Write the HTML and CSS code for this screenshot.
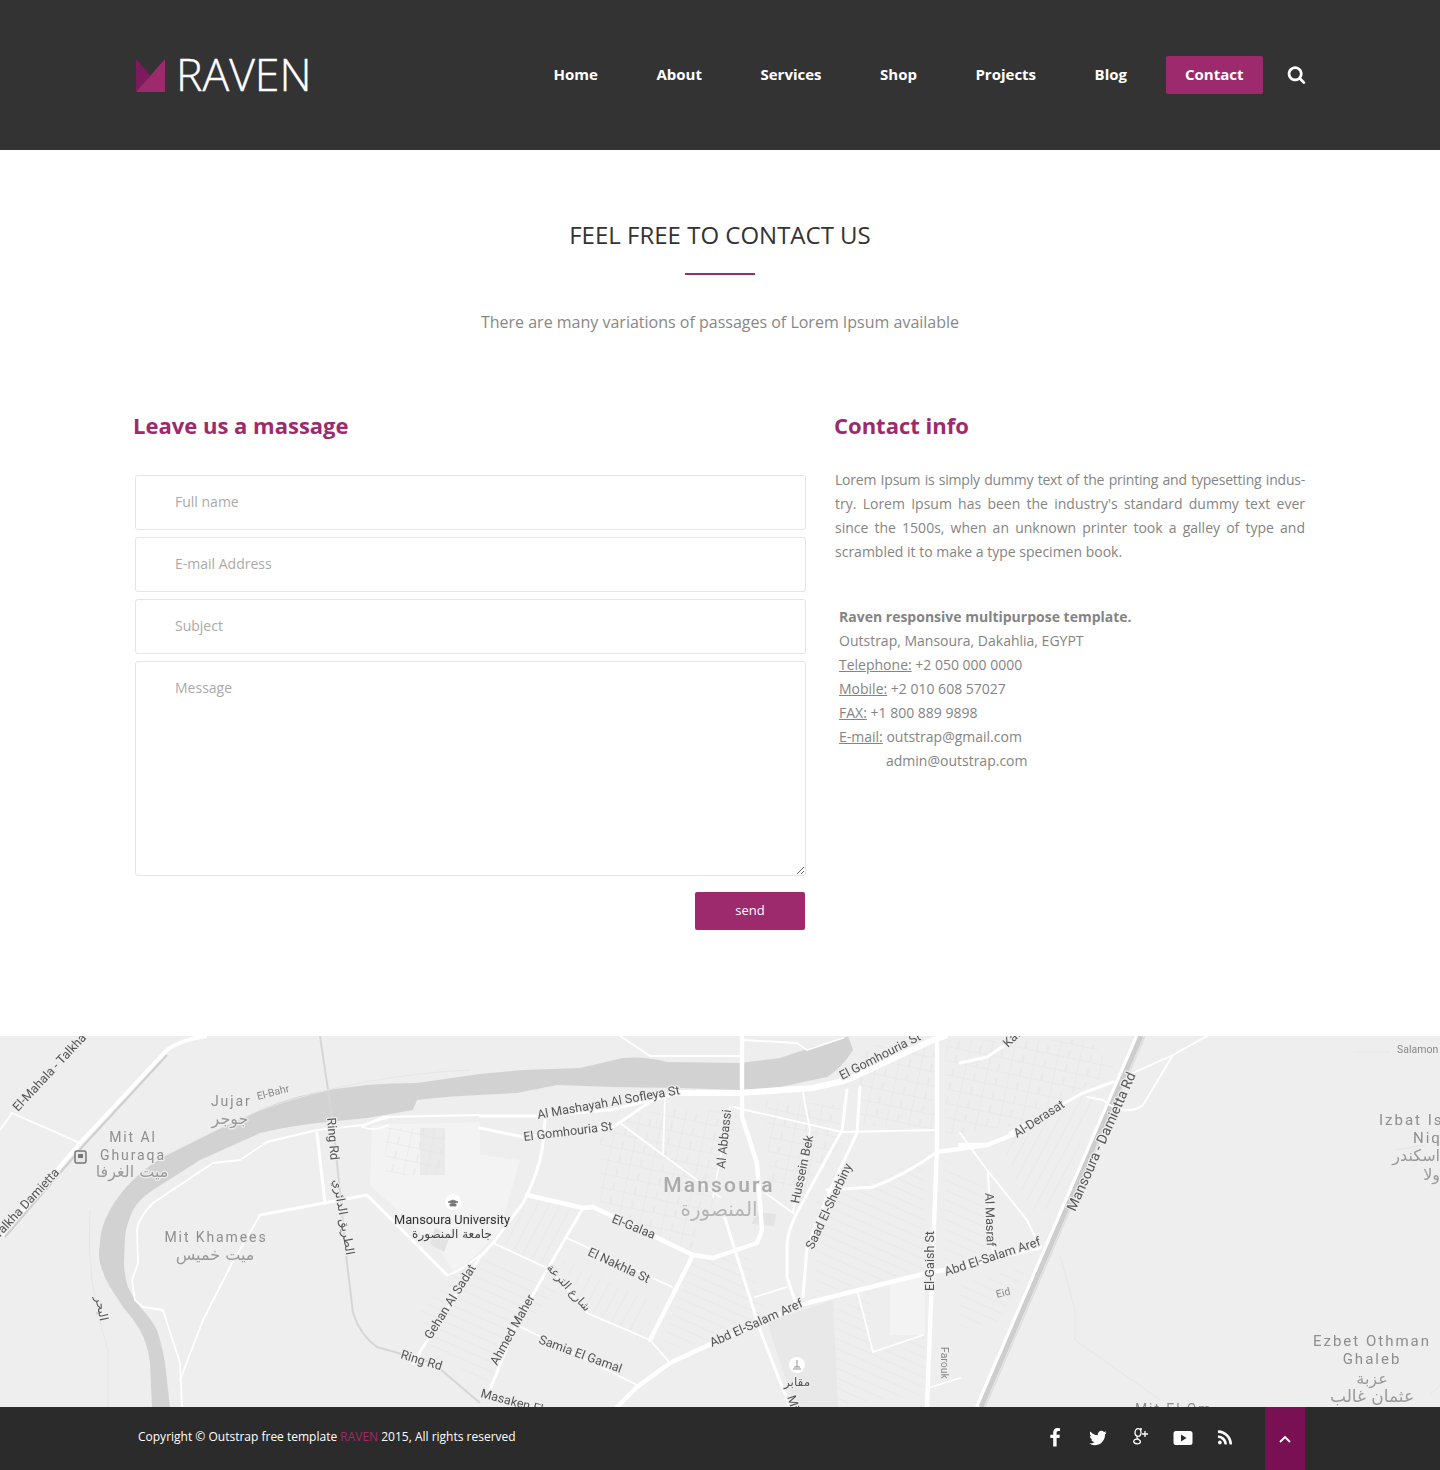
FILE: index.html
```html
<!DOCTYPE html>
<html lang="en">
<head>
<meta charset="utf-8">
<title>Raven - Contact</title>
<link rel="stylesheet" href="styles.css">
</head>
<body>
<header class="site-header">
  <div class="container header-inner">
    <a class="logo" href="#">
      <svg class="logo-mark" viewBox="0 0 30 33" width="30" height="33"><polygon class="mark-dark" points="1,0 17,18 1,33"/><polygon class="mark-light" points="30,0 30,33 1,33"/></svg>
      <span class="logo-text">RAVEN</span>
    </a>
    <nav class="main-nav">
      <a href="#">Home</a><a href="#">About</a><a href="#">Services</a><a href="#">Shop</a><a href="#">Projects</a><a href="#">Blog</a><a href="#" class="active">Contact</a>
    </nav>
    <svg class="search-icon" viewBox="0 0 1792 1792" width="19" height="19"><path d="M1216 832q0-185-131.500-316.500t-316.500-131.500-316.500 131.500-131.500 316.500 131.500 316.500 316.500 131.500 316.500-131.500 131.500-316.500zm512 832q0 52-38 90t-90 38q-54 0-90-38l-343-342q-179 124-399 124-143 0-273.500-55.500t-225-150-150-225-55.500-273.500 55.500-273.500 150-225 225-150 273.500-55.500 273.500 55.500 225 150 150 225 55.500 273.500q0 220-124 399l343 343q37 37 37 90z"/></svg>
  </div>
</header>

<main class="container contact">
  <div class="section-head">
    <h2>FEEL FREE TO CONTACT US</h2>
    <div class="divider"></div>
    <p>There are many variations of passages of Lorem Ipsum available</p>
  </div>
  <div class="columns">
    <section class="col-form">
      <h3 class="title title-form">Leave us a massage</h3>
      <form class="form">
        <input type="text" placeholder="Full name">
        <input type="text" placeholder="E-mail Address">
        <input type="text" placeholder="Subject">
        <textarea placeholder="Message"></textarea>
        <button type="button">send</button>
      </form>
    </section>
    <section class="col-info">
      <h3 class="title">Contact info</h3>
      <p class="info-text">
        <span class="line line-tight">Lorem Ipsum is simply dummy text of the printing and typesetting indus-</span>
        <span class="line">try. Lorem Ipsum has been the industry's standard dummy text ever</span>
        <span class="line">since the 1500s, when an unknown printer took a galley of type and</span>
        <span class="line line-last">scrambled it to make a type specimen book.</span>
      </p>
      <address class="address">
        <strong>Raven responsive multipurpose template.</strong><br>
        Outstrap, Mansoura, Dakahlia, EGYPT<br>
        <u>Telephone:</u> +2 050 000 0000<br>
        <u>Mobile:</u> +2 010 608 57027<br>
        <u>FAX:</u> +1 800 889 9898<br>
        <u>E-mail:</u> outstrap@gmail.com<br>
        <span class="indent">admin@outstrap.com</span>
      </address>
    </section>
  </div>
</main>

<div class="map">
<svg viewBox="0 1036 1440 371" width="1440" height="371">
  <defs>
    <pattern id="hatchA" width="9" height="9" patternUnits="userSpaceOnUse" patternTransform="rotate(24)"><path class="hatch" d="M0 0H9"/></pattern>
    <pattern id="hatchB" width="10" height="10" patternUnits="userSpaceOnUse" patternTransform="rotate(-62)"><path class="hatch" d="M0 0H10"/></pattern>
    <pattern id="hatchC" width="22" height="14" patternUnits="userSpaceOnUse" patternTransform="rotate(12)"><path class="hatch" d="M0 0H22M0 0V14M11 7V14"/></pattern>
  </defs>
  <rect class="land" x="0" y="1036" width="1440" height="371"/>

  <g class="blocks">
    <polygon class="hatch-a" points="420,1310 480,1250 560,1290 520,1330 490,1390 430,1345"/>
    <polygon class="hatch-b" points="533,1200 590,1212 555,1270 497,1240"/>
    <polygon class="hatch-c" points="600,1125 660,1110 740,1110 715,1200 690,1250 600,1205"/>
    <polygon class="hatch-b" points="560,1260 650,1300 640,1340 590,1310"/>
    <polygon class="hatch-a" points="690,1265 745,1250 770,1320 720,1340 660,1350"/>
    <polygon class="hatch-c" points="765,1100 840,1105 845,1135 800,1205 770,1185"/>
    <polygon class="hatch-a" points="815,1200 925,1160 925,1270 815,1295"/>
    <polygon class="hatch-c" points="860,1045 935,1045 935,1130 860,1125"/>
    <polygon class="hatch-c" points="945,1040 1090,1040 1115,1070 1020,1125 945,1135"/>
    <polygon class="hatch-b" points="1000,1140 1080,1095 1100,1100 1050,1210 1030,1210"/>
    <polygon class="hatch-a" points="945,1160 985,1180 985,1250 945,1265"/>
    <polygon class="hatch-a" points="960,1285 1030,1265 1000,1320 960,1330"/>
    <polygon class="hatch-a" points="835,1310 870,1290 870,1352 925,1335 925,1395 830,1405"/>
    <polygon class="cemetery" points="767,1322 833,1300 838,1407 795,1407"/>
    <polygon class="lot" points="890,1285 925,1275 925,1335 890,1335"/>
    <polygon class="lot" points="372,1125 480,1122 480,1155 520,1160 500,1230 455,1275 440,1250 370,1185"/>
    <polygon class="lot-dark" points="435,1228 450,1236 444,1252 430,1244"/>
    <polygon class="lot-dark" points="755,1212 776,1214 774,1226 752,1224"/>
    <polygon class="hatch-c" points="385,1128 445,1128 445,1175 385,1175"/>
    <polygon class="hatch-dense" points="420,1128 445,1128 445,1175 420,1175"/>
  </g>

  <path class="river" d="M480 1074 L417 1083 Q390 1083 367 1085 L327 1090 Q295 1096 267 1107 L217 1130 L167 1155 Q148 1165 133 1180 Q118 1195 110 1210 Q100 1228 100 1243 Q98 1255 100 1263 Q103 1275 110 1287 L123 1307 Q133 1318 140 1330 Q148 1345 150 1363 L152 1407 L170 1407 L165 1363 Q162 1345 157 1330 Q150 1317 140 1307 Q133 1298 128 1287 Q124 1275 124 1263 L125 1237 Q127 1222 133 1210 Q140 1198 153 1190 L200 1160 L260 1133 Q290 1126 317 1123 L367 1118 L413 1110 L417 1100 Q450 1096 480 1095 L517 1093 L557 1085 L613 1087 L680 1088 L740 1090 L780 1087 L827 1077 Q842 1068 853 1050 L848 1036 L847 1037 L813 1047 L780 1058 L740 1063 L667 1062 Q645 1056 623 1058 L580 1068 L523 1070 Z"/>

  <path class="ring-main" d="M320 1036 L333 1123 L347 1263 L353 1313 Q360 1335 377 1347 L433 1363 L480 1403"/>
  <g class="ring-gray">
    <path d="M90 1210 Q85 1280 108 1350 V1407"/>
    <path d="M260 1110 Q360 1075 470 1070"/>
    <path d="M1060 1255 L1075 1310 L1075 1340 L1160 1400"/>
    <path d="M1390 1052 H1355"/>
    <path d="M1395 1150 L1425 1145"/>
    <path d="M1430 1395 L1440 1385"/>
  </g>

  <g class="motorway-edge">
    <path d="M1137 1036 L977 1407"/>
    <path d="M207 1036 Q180 1040 167 1050 L80 1143 L0 1237"/>
  </g>
  <path class="motorway-core" d="M1141 1036 L981 1407"/>
  <path class="motorway-right" d="M1145 1036 L985 1407"/>
  <path class="motorway-left" d="M167 1055 L84 1145 L5 1237"/>

  <g class="road thin">
    <path d="M12 1113 L80 1143"/>
    <path d="M12 1113 L0 1130"/>
    <path d="M480 1115 L383 1117 L363 1125 L317 1130 L267 1142 L240 1160 L213 1163 L153 1203 Q138 1218 137 1230 L138 1263 L132 1280 L135 1300 L143 1307 L163 1310 L180 1363 L182 1407"/>
    <path d="M260 1215 L230 1267 L203 1320 L180 1380"/>
    <path d="M362 1127 Q375 1132 388 1125 M362 1127 Q375 1120 388 1118"/>
    <path d="M447 1275 Q460 1272 480 1255"/>
    <path d="M493 1243 L547 1268 Q570 1290 587 1313 L650 1340"/>
    <path d="M567 1238 L672 1287"/>
    <path d="M517 1325 L637 1385"/>
    <path d="M665 1097 L663 1155 L720 1197"/>
    <path d="M620 1123 L663 1155"/>
    <path d="M733 1107 L842 1132 L937 1130"/>
    <path d="M730 1107 L713 1197"/>
    <path d="M803 1093 L810 1130 L793 1212"/>
    <path d="M757 1187 L793 1213"/>
    <path d="M755 1297 L787 1287"/>
    <path d="M858 1293 L873 1352 L923 1335"/>
    <path d="M928 1388 L960 1378"/>
    <path d="M620 1036 L650 1056 L742 1056"/>
    <path d="M743 1040 L797 1043 L807 1050 L843 1038"/>
    <path d="M1133 1073 L1173 1055 L1207 1036"/>
    <path d="M1087 1097 L1103 1100 Q1118 1112 1127 1110 Q1138 1110 1143 1105 L1173 1055"/>
    <path d="M960 1133 L987 1170 L1027 1220 L1038 1243"/>
    <path d="M988 1173 L993 1257"/>
    <path d="M670 1363 L650 1340"/>
  </g>
  <g class="road medium">
    <path d="M260 1215 L367 1195 L447 1275"/>
    <path d="M317 1133 L325 1203"/>
    <path d="M413 1363 L480 1257 L493 1243 L523 1203 Q540 1170 543 1143 L545 1120"/>
    <path d="M480 1128 L523 1137 L613 1127 L653 1100 L680 1093"/>
    <path d="M583 1208 L547 1270 L517 1323 L487 1397"/>
    <path d="M723 1212 L760 1330 L790 1407"/>
    <path d="M860 1087 L857 1133 L827 1197 L807 1247 L803 1297"/>
    <path d="M847 1090 L842 1130 L800 1207 Q787 1230 787 1247 L787 1277 L797 1307"/>
    <path d="M827 1190 L873 1187 Q905 1175 937 1152"/>
    <path d="M960 1063 L987 1057 L1017 1037"/>
    <path d="M1010 1133 L1083 1093 L1113 1082"/>
    <path d="M480 1116 L537 1116 L610 1110 L680 1093"/>
  </g>
  <g class="road wide">
    <path d="M742 1036 V1117 L757 1163 L762 1230 L757 1243 L713 1258 L693 1255 L593 1207 L583 1208 L527 1195"/>
    <path d="M693 1255 L650 1340"/>
    <path d="M617 1407 L637 1387 L670 1363 L713 1343 L807 1303 L927 1273 L960 1267 L1040 1247"/>
    <path d="M937 1036 V1147 L927 1407"/>
    <path d="M960 1145 L987 1145 L1017 1133"/>
    <path d="M937 1152 L987 1145"/>
  </g>
  <path class="road heavy" d="M680 1093 L740 1093 L813 1088 L847 1080 L933 1040 L945 1036"/>

  <g class="marker">
    <rect x="75" y="1151" width="11" height="12" rx="2"/>
    <path d="M78 1154 H83 V1158 H78 Z"/>
  </g>
  <circle class="poi" cx="453" cy="1202" r="8"/>
  <path class="poi-glyph" d="M448 1202 L453 1200 L458 1202 L453 1204 Z M450 1204 V1206 H456 V1204"/>
  <circle class="poi" cx="797" cy="1365" r="8"/>
  <path class="poi-glyph" d="M797 1360 V1367 M793 1369 H801 M794 1367 H800"/>

  <g class="lbl place">
    <text x="211" y="1106">Jujar</text>
    <text x="133" y="1142" class="mid">Mit Al</text>
    <text x="133" y="1160" class="mid">Ghuraqa</text>
    <text x="216" y="1242" class="mid">Mit Khamees</text>
    <text x="1372" y="1346" class="mid place-lg">Ezbet Othman</text>
    <text x="1372" y="1364" class="mid place-lg">Ghaleb</text>
    <text x="1379" y="1125" class="place-lg">Izbat Is</text>
    <text x="1413" y="1143" class="place-lg">Niq</text>
    <text x="1135" y="1414">Mit El Om</text>
  </g>
  <g class="lbl ar place-ar">
    <text x="230" y="1124" class="mid">جوجر</text>
    <text x="132" y="1177" class="mid">ميت الغرفا</text>
    <text x="215" y="1260" class="mid">ميت خميس</text>
    <text x="1372" y="1384" class="mid">عزبة</text>
    <text x="1372" y="1402" class="mid place-ar-lg">عثمان غالب</text>
    <text x="1440" y="1161" class="end">اسكندر</text>
    <text x="1440" y="1180" class="end">ولا</text>
    <text x="797" y="1386" class="mid small-ar">مقابر</text>
    <text transform="translate(95 1297) rotate(78)" class="small-ar">البحر</text>
  </g>
  <g class="lbl city">
    <text x="719" y="1192" class="mid">Mansoura</text>
  </g>
  <text x="719" y="1216" class="lbl ar city-ar mid">المنصورة</text>

  <g class="lbl street">
    <text transform="translate(18 1112) rotate(-47)">El-Mahala - Talkha</text>
    <text transform="translate(60 1173) rotate(-47)" class="end">Talkha Damietta</text>
    <text transform="translate(327 1118) rotate(85)">Ring Rd</text>
    <text transform="translate(431 1340) rotate(-58)">Gehan Al Sadat</text>
    <text transform="translate(400 1358) rotate(17)">Ring Rd</text>
    <text transform="translate(497 1366) rotate(-61)">Ahmed Maher</text>
    <text transform="translate(480 1397) rotate(15)">Masaken El</text>
    <text transform="translate(538 1343) rotate(20)">Samia El Gamal</text>
    <text transform="translate(538 1119) rotate(-10)">Al Mashayah Al Sofleya St</text>
    <text transform="translate(524 1141) rotate(-7)">El Gomhouria St</text>
    <text transform="translate(725 1169) rotate(-84)">Al Abbassi</text>
    <text transform="translate(611 1222) rotate(22)">El-Galaa</text>
    <text transform="translate(587 1255) rotate(25)">El Nakhla St</text>
    <text transform="translate(799 1204) rotate(-78)">Hussein Bek</text>
    <text transform="translate(813 1250) rotate(-65)">Saad El-Sherbiny</text>
    <text transform="translate(712 1347) rotate(-24)">Abd El-Salam Aref</text>
    <text transform="translate(842 1080) rotate(-27)">El Gomhouria St</text>
    <text transform="translate(934 1291) rotate(-90)">El-Gaish St</text>
    <text transform="translate(946 1276) rotate(-18)">Abd El-Salam Aref</text>
    <text transform="translate(985 1193) rotate(88)">Al Masraf</text>
    <text transform="translate(1017 1138) rotate(-33)">Al-Derasat</text>
    <text transform="translate(1075 1212) rotate(-66)" class="street-lg">Mansoura - Damietta Rd</text>
    <text transform="translate(1008 1048) rotate(-45)">Kafr</text>
    <text transform="translate(787 1397) rotate(72)">Mit</text>
  </g>
  <g class="lbl ar street-ar">
    <text transform="translate(333 1180) rotate(80)">الطريق الدائري</text>
    <text transform="translate(566 1290) rotate(48)" class="mid street-ar-sm">شارع الترعة</text>
  </g>
  <g class="lbl uni">
    <text x="452" y="1224" class="mid">Mansoura University</text>
  </g>
  <text x="452" y="1238" class="lbl ar uni-ar mid">جامعة المنصورة</text>
  <g class="lbl minor">
    <text transform="translate(258 1100) rotate(-15)">El-Bahr</text>
    <text transform="translate(997 1298) rotate(-15)">Eid</text>
    <text transform="translate(941 1347) rotate(90)">Farouk</text>
    <text x="1397" y="1053">Salamon</text>
  </g>
</svg>
</div>

<footer class="site-footer">
  <div class="footer-inner">
    <p class="copy">Copyright © Outstrap free template <span class="brand">RAVEN</span> 2015, All rights reserved</p>
    <div class="social">
      <svg class="s-f" viewBox="0 0 1792 1792" width="20" height="20"><path d="M1343 12v264h-157q-86 0-116 36t-30 108v189h293l-39 296h-254v759h-306v-759h-255v-296h255v-218q0-186 104-288.500t277-102.500q147 0 228 12z"/></svg>
      <svg class="s-t" viewBox="0 0 1792 1792" width="20" height="20"><path d="M1684 408q-67 98-162 167 1 14 1 42 0 130-38 259.500t-115.500 248.500-184.500 210.500-258 146-323 54.500q-271 0-496-145 35 4 76 4 225 0 401-138-105-2-188-64.500t-114-159.500q33 5 61 5 43 0 85-11-112-23-185.500-111.500t-73.500-205.500v-4q68 38 146 41-66-44-105-115t-39-154q0-88 44-163 121 149 294.500 238.500t371.500 99.500q-8-38-8-74 0-134 94.500-228.500t228.500-94.500q140 0 236 102 109-21 205-78-37 115-142 178 100-11 197-53z"/></svg>
      <svg class="s-g" viewBox="0 0 18 18" width="18" height="18"><ellipse class="gp" cx="6" cy="5.500" rx="3" ry="3.800"/><path class="gp" d="M8 2 H10 M6 9.300 C4 10.500 5 11.500 7 12.700 C9.500 14.200 8.800 16.800 5.500 16.800 C2 16.800 0.800 14.600 2.300 13 C3 12.200 4.500 12 6.500 12.200 M13 4 V10 M10 7 H16"/></svg>
      <svg class="s-y" viewBox="0 0 20 16" width="20" height="16"><path fill-rule="evenodd" d="M3 1 H17 Q19.500 1 19.500 3.500 V12.500 Q19.500 15 17 15 H3 Q0.500 15 0.500 12.500 V3.500 Q0.500 1 3 1 Z M8 4.500 V11.500 L13.500 8 Z"/></svg>
      <svg class="s-r" viewBox="0 0 1792 1792" width="18" height="18"><path d="M576 1344q0 80-56 136t-136 56-136-56-56-136 56-136 136-56 136 56 56 136zm512 123q2 28-17 48-18 21-47 21h-135q-25 0-43-16.500t-20-41.500q-22-229-184.500-391.500t-391.500-184.500q-25-2-41.500-20t-16.500-43v-135q0-29 21-47 17-17 43-17h5q160 13 306 80.500t259 181.500q114 113 181.500 259t80.500 306zm512 2q2 27-18 47-18 20-46 20h-143q-26 0-44.500-17.500t-19.500-42.500q-12-215-101-408.500t-231.500-336-336-231.500-408.500-102q-25-1-42.500-19.500t-17.500-43.500v-143q0-28 20-46 18-18 44-18h3q262 13 501.500 120t425.500 294q187 186 294 425.500t120 501.500z"/></svg>
    </div>
    <a class="to-top" href="#"><svg viewBox="0 0 12 8" width="12" height="8"><path d="M1 7 L6 2 L11 7"/></svg></a>
  </div>
</footer>
</body>
</html>
```
FILE: styles.css
```css
* { box-sizing: border-box; }
html, body { margin: 0; padding: 0; }
body { font-family: "Open Sans", "Noto Sans", sans-serif; font-size: 14px; color: #848484; background: #fff; width: 1440px; }
a { text-decoration: none; color: inherit; }
.container { width: 1170px; margin: 0 auto; }

.site-header { background: #333; height: 150px; }
.header-inner { display: flex; align-items: center; height: 150px; }
.logo { display: flex; align-items: center; gap: 11px; }
.logo-mark { display: block; margin-top: 1px; }
.mark-dark { fill: #7b1a5c; }
.mark-light { fill: #9c2a6d; }
.logo-text { font-weight: 300; font-size: 44.500px; line-height: 50px; color: #fff; -webkit-text-stroke: .4px #fff; margin-top: -2px; }
.main-nav { margin-left: auto; display: flex; gap: 18.500px; align-items: center; }
.main-nav a { color: #fff; font-weight: 700; font-size: 15px; line-height: 36px; height: 38px; padding: 0 20px; border-radius: 2px; }
.main-nav a.active { background: #9c2a6d; padding: 0 19.500px; }
.search-icon { fill: #fff; margin-left: 24px; margin-right: -1px; margin-top: -1px; display: block; }

.section-head { text-align: center; padding-top: 70px; }
.section-head h2 { margin: 0; font-weight: 400; font-size: 24px; line-height: 30px; color: #333; }
.divider { width: 70px; height: 2px; background: #9c2a6d; margin: 23px auto 0; }
.section-head p { margin: 35px 0 0; font-size: 16px; line-height: 24px; color: #888; }

.columns { display: grid; grid-template-columns: 671px 470px; column-gap: 29px; padding-top: 76px; padding-bottom: 106px; }
.title { margin: 0; font-size: 22px; line-height: 30px; font-weight: 700; color: #9c2a6d; margin-left: -1px; }
.title-form { margin-left: -2px; }

.form { display: flex; flex-direction: column; gap: 7px; margin-top: 35px; }
.form input, .form textarea { display: block; width: 671px; border: 1px solid #e4e4e4; border-radius: 3px; background: #fff; padding: 0 39px; font-family: inherit; font-size: 14px; color: #777; outline: none; margin: 0; }
.form input { height: 55px; padding-bottom: 2px; }
.form textarea { height: 215px; padding-top: 16px; line-height: 20px; resize: vertical; }
.form ::placeholder { color: #aaa; opacity: 1; }
.form button { align-self: flex-end; width: 110px; height: 38px; margin: 9px 1px 0 0; padding: 0 0 2px; background: #9c2a6d; color: #fff; border: 0; border-radius: 2px; font-family: inherit; font-size: 13px; }

.info-text { margin: 28px 0 0; line-height: 24px; color: #848484; }
.line { display: block; white-space: nowrap; text-align: justify; text-align-last: justify; }
.line-tight { letter-spacing: -.22px; }
.line-last { text-align-last: left; }
.address { font-style: normal; margin: 41px 0 0 4px; line-height: 24px; color: #848484; }
.indent { padding-left: 47px; }

.map { height: 371px; overflow: hidden; background: #eee; }
.map svg { display: block; filter: blur(.35px); }
.land { fill: #eee; }
.river { fill: #d2d2d2; }
.road { fill: none; stroke: #fff; stroke-linecap: round; stroke-linejoin: round; }
.thin { stroke-width: 1.800; }
.medium { stroke-width: 3; }
.wide { stroke-width: 4.400; }
.heavy { stroke-width: 6; }
.ring-main { fill: none; stroke: #d6d6d6; stroke-width: 2; }
.ring-gray { fill: none; stroke: #e6e6e6; stroke-width: 1; }
.motorway-edge { fill: none; stroke: #fff; stroke-width: 4; }
.motorway-core { fill: none; stroke: #cdcdcd; stroke-width: 5; }
.motorway-right { fill: none; stroke: #dedede; stroke-width: 1.500; }
.motorway-left { fill: none; stroke: #cfcfcf; stroke-width: 2; }
.hatch { stroke: #e3e3e3; stroke-width: 1; fill: none; }
.hatch-a { fill: url(#hatchA); }
.hatch-b { fill: url(#hatchB); }
.hatch-c { fill: url(#hatchC); }
.hatch-dense { fill: #e2e2e2; opacity: .5; }
.lot { fill: #f3f3f3; }
.lot-dark { fill: #e3e3e3; }
.cemetery { fill: #e8e8e8; }
.marker rect { fill: #e8e8e8; stroke: #777; stroke-width: 1.500; }
.marker path { fill: #777; }
.poi { fill: #fff; }
.poi-glyph { fill: #777; stroke: #777; stroke-width: .8; }

.lbl { font-family: Roboto, "Noto Sans", sans-serif; stroke: #eee; stroke-width: 2.500; paint-order: stroke; stroke-linejoin: round; }
.ar { font-family: "DejaVu Sans", "Noto Sans", sans-serif; }
.mid { text-anchor: middle; }
.end { text-anchor: end; }
.place { font-size: 14px; letter-spacing: 1.900px; fill: #8e8e8e; }
.place-lg { font-size: 15px; letter-spacing: 2px; }
.place-ar { font-size: 16px; fill: #999; }
.place-ar-lg { font-size: 17px; }
.small-ar { font-size: 12px; fill: #555; }
.city { font-size: 21px; letter-spacing: 2.200px; font-weight: 500; fill: #aaa; }
.city-ar { font-size: 20px; fill: #b5b5b5; }
.street { font-size: 12.500px; fill: #555; }
.street-lg { font-size: 14px; }
.street-ar { font-size: 12px; fill: #555; }
.street-ar-sm { font-size: 11.500px; }
.uni { font-size: 12.800px; fill: #333; }
.uni-ar { font-size: 12px; fill: #444; }
.minor { font-size: 10.500px; fill: #888; }

.site-footer { background: #2b2b2b; height: 63px; }
.footer-inner { width: 1170px; margin: 0 auto; height: 63px; display: flex; align-items: center; position: relative; }
.copy { margin: 0 0 4px 3px; font-size: 12px; line-height: 20px; color: #fff; }
.brand { color: #9c2a6d; }
.social { display: flex; align-items: center; gap: 23px; margin-left: auto; margin-right: 31px; margin-top: -2px; }
.social svg { fill: #fff; display: block; }
.social .s-g { margin: -3px 0 0 1px; fill: none; }
.gp { fill: none; stroke: #fff; stroke-width: 1.300; }
.to-top { width: 40px; height: 63px; background: #7a1054; display: flex; align-items: center; justify-content: center; }
.to-top svg { fill: none; stroke: #fff; stroke-width: 1.800; }
```
